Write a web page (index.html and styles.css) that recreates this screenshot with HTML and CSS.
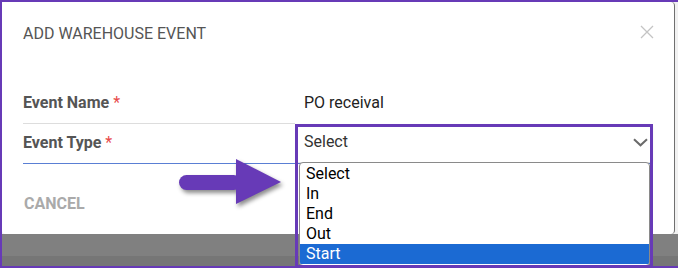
FILE: index.html
```html
<!DOCTYPE html>
<html lang="en">
	<head>
		<meta charset="utf-8">
		<title>Add Warehouse Event</title>
		<link rel="stylesheet" href="styles.css">
	</head>
	<body>
		<div class="frame">
			<div class="top">
				<div class="modal">
					<div class="modal-head">
						<h2>Add Warehouse Event</h2>
						<button class="close" aria-label="Close">
							<svg width="14" height="14" viewBox="0 0 14 14"><path d="M1 1L13 13M13 1L1 13" stroke="#c4c4c4" stroke-width="1.3" fill="none"/></svg>
						</button>
					</div>
					<div class="modal-body">
						<div class="row">
							<div class="label line">Event Name <span class="req">*</span></div>
							<div class="value">PO receival</div>
						</div>
						<div class="row focus">
							<div class="label">Event Type <span class="req">*</span></div>
							<div class="value select-cell">
								<div class="select">
									<span>Select</span>
									<svg width="15" height="9" viewBox="0 0 15 9"><path d="M1 1.2L7.5 7.3L14 1.2" stroke="#6a6a6a" stroke-width="2" fill="none"/></svg>
								</div>
							</div>
						</div>
					</div>
					<div class="modal-foot">
						<button class="cancel">Cancel</button>
					</div>
				</div>
			</div>
			<div class="backdrop"></div>

			<ul class="listbox">
				<li>Select</li>
				<li>In</li>
				<li>End</li>
				<li>Out</li>
				<li class="active">Start</li>
			</ul>
			<div class="callout"></div>
			<svg class="pointer" width="120" height="62" viewBox="0 0 120 62">
				<rect x="9" y="25" width="62" height="15" rx="7.5" fill="#673ab7"/>
				<polygon points="66,9 111,32 66,54" fill="#673ab7"/>
			</svg>
		</div>
	</body>
</html>
```

FILE: styles.css
```css
* { padding: 0; margin: 0; box-sizing: border-box; }
body { font-family: Roboto, "Liberation Sans", sans-serif; font-size: 16px; color: #222; background: #fff; }
button { font-family: inherit; background: none; border: none; cursor: pointer; }

.frame {
	position: relative;
	width: 678px;
	height: 268px;
	border: 2px solid #673ab7;
	border-right: none;
	overflow: hidden;
}
.top {
	height: 232px;
	background: #f1f1f1;
}
.modal {
	width: 673px;
	height: 232px;
	background: #fff;
	border-right: 1px solid #6f6f6f;
	border-radius: 0 4px 4px 4px;
}
.backdrop {
	height: 32px;
	background: linear-gradient(#808080 0, #808080 22px, #767676 22px);
}

.modal-head {
	display: flex;
	justify-content: space-between;
	align-items: flex-start;
	padding: 22px 20px 0 21px;
}
.modal-head h2 {
	font-size: 16px;
	font-weight: 400;
	line-height: 20px;
	color: #555;
	text-transform: uppercase;
}
.close { margin-top: 1px; line-height: 0; }

.modal-body { padding: 40px 23px 0 21px; }
.row { display: flex; line-height: 20px; }
.row.focus { border-bottom: 1px solid #5a7fd4; }
.label {
	width: 272px;
	padding: 9px 0 10px;
	font-weight: 700;
	color: #555;
}
.label.line { border-bottom: 1px solid #ddd; }
.req { color: #e84a4a; font-weight: 400; }
.value { flex: 1; padding: 9px 0 10px 9px; color: #222; }
.select-cell { padding: 3px 0 1px 3px; }
.select {
	display: flex;
	justify-content: space-between;
	align-items: flex-start;
	height: 35px;
	padding: 5px 3px 0 6px;
	background: #fff;
	color: #333;
	box-shadow: 0 0 3px rgba(0,0,0,.35);
}
.select svg { margin-top: 6px; }

.modal-foot { padding: 30px 0 0 22px; }
.cancel {
	font-size: 16px;
	font-weight: 700;
	line-height: 20px;
	color: #aaa;
	text-transform: uppercase;
}

.listbox {
	position: absolute;
	left: 297px;
	top: 160px;
	width: 351px;
	height: 104px;
	padding-top: 1px;
	list-style: none;
	background: #fff;
	border: 1px solid #8a8a8a;
	border-radius: 4px;
	overflow: hidden;
	color: #000;
	line-height: 20px;
}
.listbox li { padding-left: 6px; }
.listbox li.active { background: #1b6ad3; color: #fff; }

.callout {
	position: absolute;
	left: 293px;
	top: 122px;
	width: 358px;
	height: 144px;
	border: 3px solid #673ab7;
}
.pointer {
	position: absolute;
	left: 168px;
	top: 148px;
	filter: drop-shadow(2px 3px 2px rgba(0,0,0,.45));
}
```
